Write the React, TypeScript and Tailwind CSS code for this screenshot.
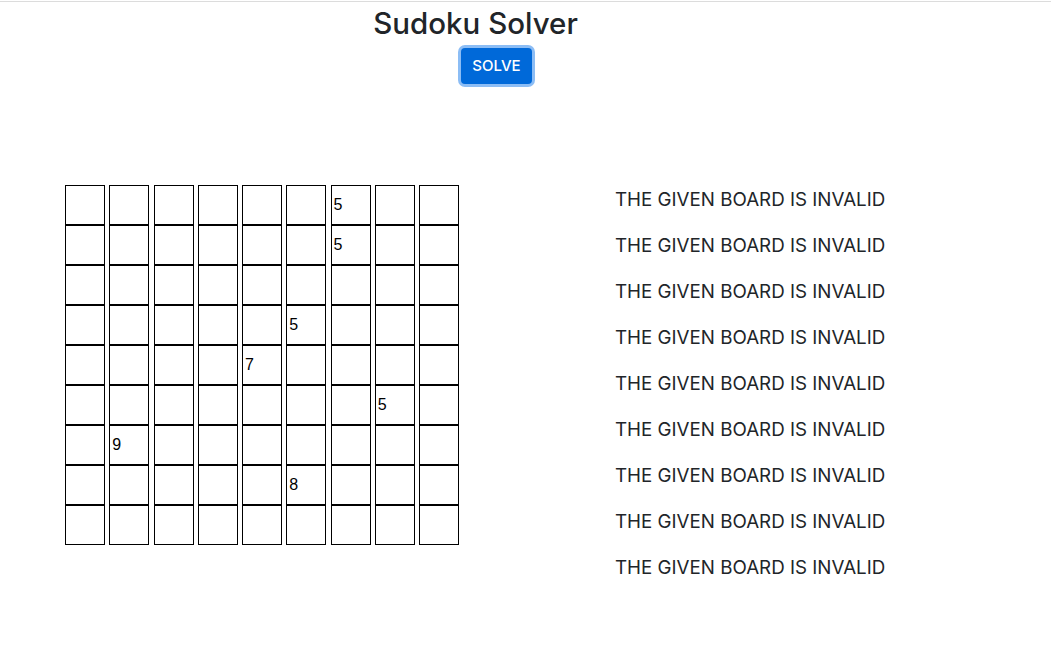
const board: (number | null)[][] = [
  [null, null, null, null, null, null, 5, null, null],
  [null, null, null, null, null, null, 5, null, null],
  [null, null, null, null, null, null, null, null, null],
  [null, null, null, null, null, 5, null, null, null],
  [null, null, null, null, 7, null, null, null, null],
  [null, null, null, null, null, null, null, 5, null],
  [null, 9, null, null, null, null, null, null, null],
  [null, null, null, null, null, 8, null, null, null],
  [null, null, null, null, null, null, null, null, null],
];

export default function App() {
  return (
    <div className="w-[1051px] h-[648px] bg-white text-[#212529] [font-family:Inter,'Liberation_Sans',sans-serif]">
      <div className="h-px mt-px bg-[#dcdcdc]" />
      <div className="flex flex-col items-center w-[951px] pt-[3px]">
        <h1 className="text-[29.5px] leading-[36px] font-medium">Sudoku Solver</h1>
      </div>
      <div className="flex justify-center w-[993px] mt-[7px]">
        <button className="h-[36px] w-[71px] rounded-[4px] bg-[#0069d9] text-white text-[15px] font-medium ring-[3px] ring-[#8cbdf5]">
          SOLVE
        </button>
      </div>
      <div className="flex mt-[101px]">
        <div className="ml-[65px] flex flex-col">
          {board.map((row, r) => (
            <div key={r} className="flex gap-[4.25px]">
              {row.map((v, c) => (
                <div
                  key={c}
                  className="w-[40px] h-[40px] border border-black flex items-center pl-[2px] text-[16px] text-black [font-family:'Liberation_Sans',Arial,sans-serif]"
                >
                  {v ?? ""}
                </div>
              ))}
            </div>
          ))}
        </div>
        <div className="ml-[156px] flex flex-col gap-[18px] pt-[1px]">
          {Array.from({ length: 9 }).map((_, i) => (
            <div key={i} className="text-[18.75px] leading-[28px]">
              THE GIVEN BOARD IS INVALID
            </div>
          ))}
        </div>
      </div>
    </div>
  );
}
